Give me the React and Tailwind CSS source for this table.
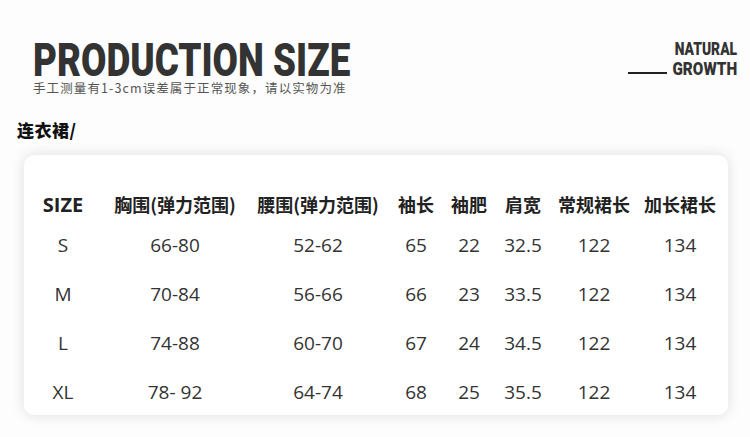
import React from 'react';

const rows = [
    ['S', '66-80', '52-62', '65', '22', '32.5', '122', '134'],
    ['M', '70-84', '56-66', '66', '23', '33.5', '122', '134'],
    ['L', '74-88', '60-70', '67', '24', '34.5', '122', '134'],
    ['XL', '78- 92', '64-74', '68', '25', '35.5', '122', '134'],
];

const heads = ['SIZE', '胸围(弹力范围)', '腰围(弹力范围)', '袖长', '袖肥', '肩宽', '常规裙长', '加长裙长'];

// column widths picked so the centres line up with the picture
const grid = 'grid grid-cols-[60px_164px_122px_74px_32px_76px_66px_106px]';

export default function App() {
    return (
        <div className="w-[750px] h-[437px] bg-[#fdfdfd] overflow-hidden font-['Open_Sans','Noto_Sans_CJK_SC',sans-serif] text-[#2b2b2b]">
            {/* header */}
            <div className="flex justify-between pl-[33px] pr-[13px] pt-[37px]">
                <div>
                    <div className="mt-[3px] origin-left scale-x-[0.8] whitespace-nowrap font-['Roboto',sans-serif] font-black text-[46px] leading-[40px] text-[#333]">
                        PRODUCTION SIZE
                    </div>
                    <div className="mt-[2px] text-[12.5px] leading-none tracking-[1.1px] text-[#555] font-['Noto_Sans_CJK_SC',sans-serif]">
                        手工测量有1-3cm误差属于正常现象，请以实物为准
                    </div>
                </div>
                <div className="flex flex-col items-end pt-[2px] font-['Roboto',sans-serif] font-black text-[18px] leading-[20px] text-[#333]">
                    <div className="origin-right scale-x-[0.77]">NATURAL</div>
                    <div className="flex items-center">
                        <span className="w-[39px] h-[2px] bg-[#222] mt-[8px] mr-[-6px]" />
                        <span className="origin-right scale-x-[0.85]">GROWTH</span>
                    </div>
                </div>
            </div>

            <div className="pl-[17px] mt-[26px] text-[17px] leading-none font-black tracking-[0.5px] text-[#111] font-['Noto_Sans_CJK_SC',sans-serif]">
                连衣裙/
            </div>

            {/* size table */}
            <div className="mx-[24px] mt-[17px] w-[704px] h-[260px] bg-white rounded-[10px] shadow-[0_0_14px_rgba(0,0,0,0.13)] pl-[9px] pt-[34px]">
                <div className={`${grid} h-[32px] items-center font-bold text-[18px] text-[#222] font-['Noto_Sans_CJK_SC',sans-serif]`}>
                    {heads.map((h) => (
                        <div key={h} className="flex justify-center whitespace-nowrap">
                            {h === 'SIZE' ? <span className="font-['Open_Sans',sans-serif] text-[20px]">{h}</span> : h}
                        </div>
                    ))}
                </div>
                {rows.map((r) => (
                    <div key={r[0]} className={`${grid} h-[49px] items-center text-[19px] text-[#333]`}>
                        {r.map((v, i) => (
                            <div key={i} className="flex justify-center whitespace-nowrap">{v}</div>
                        ))}
                    </div>
                ))}
            </div>
        </div>
    );
}
